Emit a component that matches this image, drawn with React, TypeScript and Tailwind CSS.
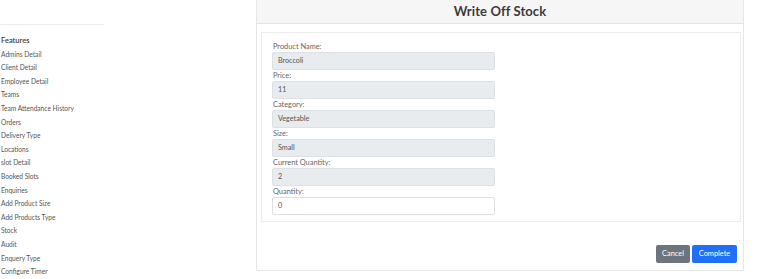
import * as React from "react";

const features = [
  "Admins Detail",
  "Client Detail",
  "Employee Detail",
  "Teams",
  "Team Attendance History",
  "Orders",
  "Delivery Type",
  "Locations",
  "slot Detail",
  "Booked Slots",
  "Enquiries",
  "Add Product Size",
  "Add Products Type",
  "Stock",
  "Audit",
  "Enquery Type",
  "Configure Timer",
];

const fields: { label: string; value: string; readOnly: boolean }[] = [
  { label: "Product Name:", value: "Broccoli", readOnly: true },
  { label: "Price:", value: "11", readOnly: true },
  { label: "Category:", value: "Vegetable", readOnly: true },
  { label: "Size:", value: "Small", readOnly: true },
  { label: "Current Quantity:", value: "2", readOnly: true },
  { label: "Quantity:", value: "0", readOnly: false },
];

function Sidebar(): React.ReactElement {
  return (
    <aside className="w-[104px] shrink-0 pt-[24px]">
      <div className="border-t border-[#ececec] pt-[9px] pl-[1px]">
        <p className="text-[7.5px] leading-[13.6px] font-semibold text-[#3a3a3a]">Features</p>
        <ul className="text-[6.6px] leading-[13.6px] text-[#555]">
          {features.map((f) => (
            <li key={f} className="whitespace-nowrap">{f}</li>
          ))}
        </ul>
      </div>
    </aside>
  );
}

function Field({ label, value, readOnly }: { label: string; value: string; readOnly: boolean }): React.ReactElement {
  return (
    <div className="h-[29px] flex flex-col">
      <label className="h-[11px] pl-[1px] text-[7.4px] leading-[11px] text-[#666]">{label}</label>
      <div
        className={
          readOnly
            ? "w-[223px] h-[18px] rounded-[2px] border border-[#dde1e5] bg-[#e9ecef] px-[5px] text-[7.2px] leading-[16px] text-[#555]"
            : "w-[223px] h-[18px] rounded-[2px] border border-[#dde1e5] bg-white px-[5px] text-[7.2px] leading-[16px] text-[#555]"
        }
      >
        {value}
      </div>
    </div>
  );
}

function WriteOffModal(): React.ReactElement {
  return (
    <section className="ml-[152px] w-[488px] h-[271px] border-x border-b border-[#e6e6e6] flex flex-col">
      <header className="h-[24px] bg-[#f6f6f6] border-b border-[#e4e4e4] flex items-center justify-center">
        <h2 className="text-[13px] font-bold text-[#3a3a3a] tracking-[0.1px]">Write Off Stock</h2>
      </header>
      <div className="ml-[4px] mr-[2px] mt-[8px] h-[190px] border border-[#ececec] pt-[8px] pl-[10px]">
        {fields.map((f) => (
          <Field key={f.label} {...f} />
        ))}
      </div>
      <footer className="flex-1 flex items-end justify-end gap-[2px] pr-[6px] pb-[7px]">
        <button className="h-[18px] w-[34px] rounded-[2px] bg-[#6c757d] text-[7.4px] text-white">Cancel</button>
        <button className="h-[18px] w-[45px] rounded-[2px] bg-[#1f6ff7] text-[7.4px] text-white">Complete</button>
      </footer>
    </section>
  );
}

export default function App(): React.ReactElement {
  return (
    <div className="flex w-[780px] h-[279px] overflow-hidden bg-white font-['Lato','Liberation_Sans',sans-serif]">
      <Sidebar />
      <WriteOffModal />
    </div>
  );
}
